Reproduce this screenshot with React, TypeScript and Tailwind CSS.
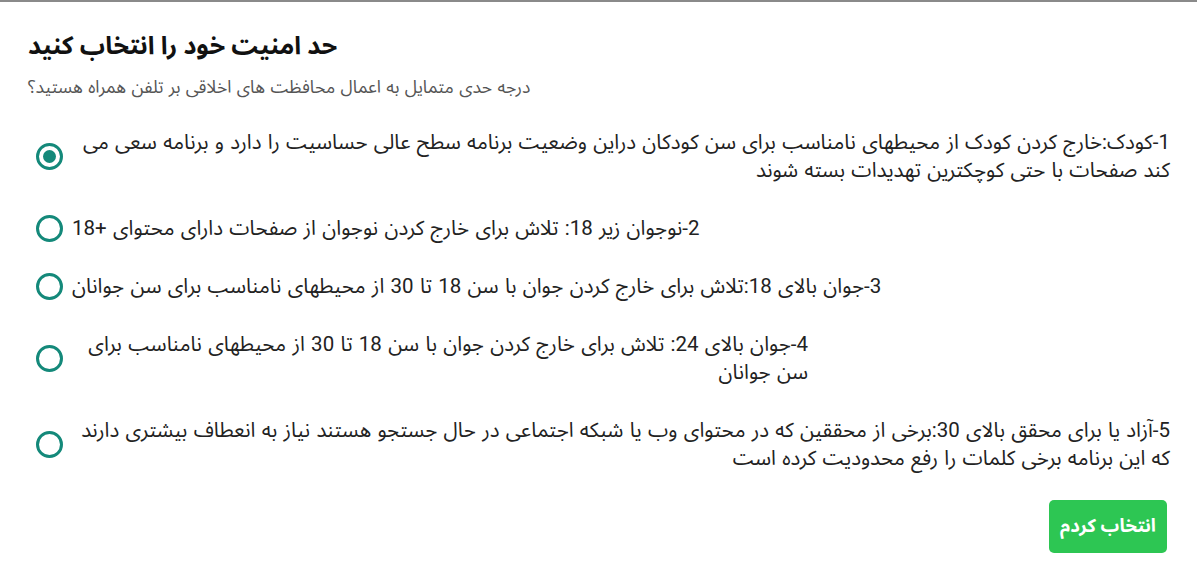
import React from 'react'

const options = [
    {
        lines: [
            '1-کودک:خارج کردن کودک از محیطهای نامناسب برای سن کودکان دراین وضعیت برنامه سطح عالی حساسیت را دارد و برنامه سعی می',
            'کند صفحات با حتی کوچکترین تهدیدات بسته شوند',
        ],
        textClass: 'flex-1',
    },
    { lines: ['2-نوجوان زیر 18: تلاش برای خارج کردن نوجوان از صفحات دارای محتوای +18'], textClass: 'w-fit' },
    { lines: ['3-جوان بالای 18:تلاش برای خارج کردن جوان با سن 18 تا 30 از محیطهای نامناسب برای سن جوانان'], textClass: 'w-fit' },
    {
        lines: ['4-جوان بالای 24: تلاش برای خارج کردن جوان با سن 18 تا 30 از محیطهای نامناسب برای', 'سن جوانان'],
        textClass: 'w-[736px]',
    },
    {
        lines: [
            '5-آزاد یا برای محقق بالای 30:برخی از محققین که در محتوای وب یا شبکه اجتماعی در حال جستجو هستند نیاز به انعطاف بیشتری دارند',
            'که این برنامه برخی کلمات را رفع محدودیت کرده است',
        ],
        textClass: 'flex-1',
    },
]

function Radio({ checked }: { checked: boolean }) {
    return (
        <div className="w-[27px] h-[27px] shrink-0 rounded-full border-[3px] border-[#14897a] flex items-center justify-center">
            {checked && <div className="w-[13px] h-[13px] rounded-full bg-[#14897a]" />}
        </div>
    )
}

export default function App() {
    return (
        <div
            className="w-[1197px] h-[583px] bg-white border-t-2 border-[#8a8a8a] text-[#222] overflow-hidden flex flex-col"
            style={{ fontFamily: 'Roboto, "Noto Sans Arabic", "DejaVu Sans", sans-serif' }}
        >
            {/* Header */}
            <div className="pl-[28px] pt-[29px]">
                <h1 dir="rtl" className="w-fit text-[25px] font-bold leading-[30px] text-[#111]">
                    حد امنیت خود را انتخاب کنید
                </h1>
                <p dir="rtl" className="w-fit mt-[14px] text-[17.5px] leading-[24px] text-[#555] [word-spacing:1px]">
                    درجه حدی متمایل به اعمال محافظت های اخلاقی بر تلفن همراه هستید؟
                </p>
            </div>

            {/* Options */}
            <div className="flex flex-col gap-[30px] mt-[29px] pl-[36px] pr-[27px]">
                {options.map((opt, i) => (
                    <div key={i} className="flex items-center gap-[9px]">
                        <Radio checked={i === 0} />
                        <div
                            dir="rtl"
                            className={`${opt.textClass} text-right text-[20.5px] leading-[28px] whitespace-nowrap [word-spacing:1.2px]`}
                        >
                            {opt.lines.map((l, j) => (
                                <div key={j}>{l}</div>
                            ))}
                        </div>
                    </div>
                ))}
            </div>

            {/* Footer */}
            <div className="flex justify-end pr-[30px] mt-[28px]">
                <button className="w-[118px] h-[53px] rounded-[5px] bg-[#2dc653] text-white text-[18.5px] font-bold">
                    انتخاب کردم
                </button>
            </div>
        </div>
    )
}
